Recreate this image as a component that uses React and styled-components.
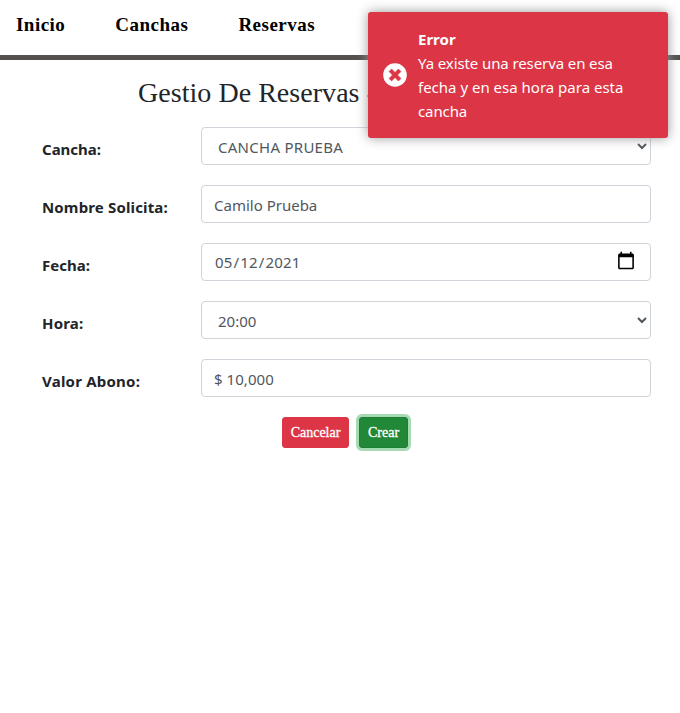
import React from "react";
import styled, { createGlobalStyle, css } from "styled-components";

const GlobalStyle = createGlobalStyle`
  *, *::before, *::after { box-sizing: border-box; }
  body {
    margin: 0;
    background: #fff;
    color: #212529;
    font: 400 16px/24px "Noto Sans", "Open Sans", sans-serif;
  }
`;

const Page = styled.div`
  min-height: 713px;
  overflow: hidden;
`;

const NavBar = styled.nav`
  display: flex;
  gap: 50px;
  height: 60px;
  padding: 10px 16px 0;
  border-bottom: 5px solid #53504d;
`;

const NavLink = styled.a`
  color: #000;
  font: 700 19px/30px "Liberation Serif", serif;
  letter-spacing: 0.48px;
  text-decoration: none;
`;

const Title = styled.h1`
  margin: 16px 0 17px;
  padding-left: 138px;
  font: 400 28px/34px "Liberation Serif", serif;
  letter-spacing: 0.04px;
  white-space: nowrap;
`;

const Form = styled.form`
  display: flex;
  flex-direction: column;
  gap: 20px;
  padding: 0 29px 0 42px;
`;

const Row = styled.div`
  display: grid;
  grid-template-columns: 159px 450px;
  height: 38px;
`;

const Label = styled.label`
  padding-top: 10px;
  font-weight: 700;
  font-size: 15px;
  letter-spacing: ${(p) => p.$tracking || 0}px;
  white-space: nowrap;
`;

const control = css`
  width: 100%;
  height: 38px;
  margin: 0;
  padding: 7px 12px 5px;
  border: 1px solid #ced4da;
  border-radius: 4px;
  background: #fff;
  color: #51575d;
  font: 400 15px/24px "Noto Sans", "Open Sans", sans-serif;
  letter-spacing: ${(p) => p.$tracking || 0}px;
  outline: none;
`;

const Input = styled.input`
  ${control}
`;

const DateInput = styled.input`
  ${control}
  padding: 6px 12px;

  &::-webkit-calendar-picker-indicator {
    width: 20px;
    height: 20px;
    padding: 0;
    margin: 0 2px 2px 0;
    background-size: contain;
  }
`;

const Select = styled.select`
  ${control}
  padding-right: 13px;
`;

const Actions = styled.div`
  display: flex;
  gap: 10px;
  padding-left: 240px;
`;

const Button = styled.button`
  width: ${(p) => p.$width}px;
  height: 31px;
  padding: 0;
  border: 1px solid ${(p) => (p.$primary ? "#1e7e34" : "#dc3545")};
  border-radius: 3px;
  background: ${(p) => (p.$primary ? "#218838" : "#dc3545")};
  box-shadow: ${(p) => (p.$primary ? "0 0 0 3px #a6dab2" : "none")};
  color: #fff;
  font: 400 14px/21px "Liberation Serif", serif;
  -webkit-text-stroke: 0.3px #fff;
`;

const Toast = styled.aside`
  position: absolute;
  top: 12px;
  right: 12px;
  display: flex;
  align-items: center;
  gap: 11px;
  width: 300px;
  height: 126px;
  padding: 15px;
  border-radius: 3px;
  background: #dc3545;
  box-shadow: 0 0 12px #999;
  color: #fff;
`;

const ToastIcon = styled.svg`
  flex: none;
  width: 24px;
  height: 24px;
`;

const ToastText = styled.div`
  font-size: 15px;
  white-space: nowrap;
`;

const ToastTitle = styled.strong`
  display: block;
`;

const ToastLine = styled.span`
  display: block;
  letter-spacing: ${(p) => p.$tracking || 0}px;
`;

export default function App() {
  return (
    <Page>
      <GlobalStyle />
      <NavBar>
        <NavLink>Inicio</NavLink>
        <NavLink>Canchas</NavLink>
        <NavLink>Reservas</NavLink>
      </NavBar>
      <Title>Gestio De Reservas -</Title>
      <Form>
        <Row>
          <Label>Cancha:</Label>
          <Select defaultValue="1" $tracking={0.27}>
            <option value="1">CANCHA PRUEBA</option>
          </Select>
        </Row>
        <Row>
          <Label $tracking={0.15}>Nombre Solicita:</Label>
          <Input defaultValue="Camilo Prueba" />
        </Row>
        <Row>
          <Label>Fecha:</Label>
          <DateInput type="date" defaultValue="2021-05-12" $tracking={0.17} />
        </Row>
        <Row>
          <Label $tracking={0.2}>Hora:</Label>
          <Select defaultValue="20:00">
            <option>20:00</option>
          </Select>
        </Row>
        <Row>
          <Label $tracking={0.22}>Valor Abono:</Label>
          <Input defaultValue="$ 10,000" $tracking={0.05} />
        </Row>
        <Actions>
          <Button type="button" $width={67}>Cancelar</Button>
          <Button type="button" $width={49} $primary>Crear</Button>
        </Actions>
      </Form>
      <Toast role="alert">
        <ToastIcon viewBox="0 0 24 24">
          <circle cx="12" cy="12" r="11.8" fill="#fff" />
          <path
            d="M8.6 6.1 12 9.5l3.4-3.4 2.5 2.5L14.5 12l3.4 3.4-2.5 2.5L12 14.5l-3.4 3.4-2.5-2.5L9.5 12 6.1 8.6z"
            fill="#dc3545"
            stroke="#dc3545"
            strokeWidth="0.7"
            strokeLinejoin="round"
          />
        </ToastIcon>
        <ToastText>
          <ToastTitle>Error</ToastTitle>
          <ToastLine $tracking={-0.1}>Ya existe una reserva en esa</ToastLine>
          <ToastLine>fecha y en esa hora para esta</ToastLine>
          <ToastLine $tracking={-0.1}>cancha</ToastLine>
        </ToastText>
      </Toast>
    </Page>
  );
}
